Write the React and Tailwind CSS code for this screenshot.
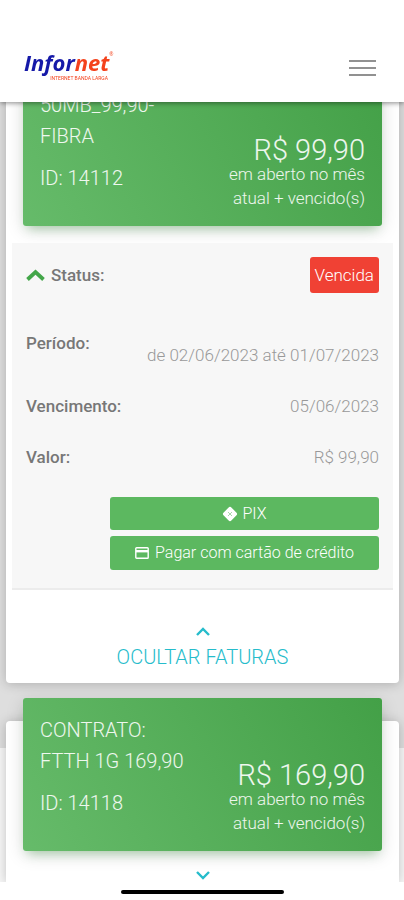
import React from 'react';

const contracts = [
    { id: '14112', lines: ['50MB_99,90-', 'FIBRA'], amount: 'R$ 99,90' },
    { id: '14118', lines: ['CONTRATO:', 'FTTH 1G 169,90'], amount: 'R$ 169,90' },
];

const Logo = () => (
    <a href="#" className="flex w-22 flex-col" aria-label="Infornet">
        <span className="flex items-start font-['Open_Sans',sans-serif] text-[22px] leading-7 font-bold italic text-[#1519a8]">
            Infor<span className="text-[#f4421c]">net</span>
            <span className="pt-1 text-[5px] leading-none font-normal not-italic text-[#f4421c]">®</span>
        </span>
        <span className="pr-1 text-right text-[5px] leading-none whitespace-nowrap text-[#f4421c]">
            INTERNET BANDA LARGA
        </span>
    </a>
);

const Header = () => (
    <header className="fixed inset-x-0 top-0 z-10 flex h-[102px] items-start justify-between bg-white pt-12 pr-7 pl-6 shadow-[0_1px_5px_rgba(0,0,0,0.45)]">
        <Logo />
        <button type="button" aria-label="Menu" className="mt-3 flex flex-col gap-[5px]">
            <span className="h-0.5 w-[27px] bg-[#919191]" />
            <span className="h-0.5 w-[27px] bg-[#919191]" />
            <span className="h-0.5 w-[27px] bg-[#919191]" />
        </button>
    </header>
);

const ContractHeader = ({ contract }) => (
    <div className="-mt-[23px] ml-[17px] mr-[17px] flex h-[153px] justify-between rounded-[3px] bg-linear-60 from-[#66bb6a] to-[#43a047] px-[17px] pt-[17px] font-light text-white/90 shadow-[0_4px_18px_rgba(0,0,0,0.14),0_7px_10px_-5px_rgba(76,175,80,0.4)]">
        <div className="text-xl leading-[31px] whitespace-nowrap">
            <h2>
                {contract.lines.map((line) => (
                    <span key={line} className="block">{line}</span>
                ))}
            </h2>
            <p className="mt-[11px]">ID: {contract.id}</p>
        </div>
        <div className="flex flex-col justify-end pb-4 text-right text-[17px] leading-6 whitespace-nowrap">
            <p className="text-[29px] leading-6">{contract.amount}</p>
            <p>em aberto no mês</p>
            <p>atual + vencido(s)</p>
        </div>
    </div>
);

const ContractCard = ({ contract, className, children }) => (
    <article className={`mr-[5px] ml-1.5 bg-white shadow-[0_1px_12px_rgba(0,0,0,0.22)] ${className}`}>
        <ContractHeader contract={contract} />
        {children}
    </article>
);

const Chevron = ({ down }) => (
    <svg viewBox="0 0 20 20" className="size-5" fill="none" stroke="currentColor" strokeWidth="2.4" aria-hidden="true">
        <path d={down ? 'M4 7l6 6 6-6' : 'M4 13l6-6 6 6'} />
    </svg>
);

const PixIcon = () => (
    <svg viewBox="0 0 16 16" className="size-4" aria-hidden="true">
        <path d="M6.4 1.7a2.2 2.2 0 0 1 3.2 0l4.7 4.7a2.2 2.2 0 0 1 0 3.2l-4.7 4.7a2.2 2.2 0 0 1-3.2 0L1.7 9.6a2.2 2.2 0 0 1 0-3.2z" fill="#fff" />
        <path d="M6 6l4 4M6 10l4-4" fill="none" stroke="#9ed3a0" strokeWidth="0.9" />
    </svg>
);

const CardIcon = () => (
    <svg viewBox="0 0 14 12" className="h-3 w-3.5" fill="none" aria-hidden="true">
        <rect x="0.8" y="0.8" width="12.4" height="10.4" rx="0.8" stroke="#fff" strokeWidth="1.4" />
        <path d="M1 4.2h12" stroke="#fff" strokeWidth="2.4" />
    </svg>
);

const Invoice = () => (
    <section className="mx-1.5 mt-[17px] border-b-2 border-[#ececec] bg-[#f7f7f7] px-3.5 pt-3.5 pb-[18px] text-[17px] leading-6 font-light text-[#999]">
        <div className="flex items-center justify-between">
            <button type="button" className="flex items-center gap-1.5 font-medium text-[#777]">
                <svg viewBox="0 0 19 13" className="h-[13px] w-[19px]" fill="none" aria-hidden="true">
                    <path d="M1.5 10.5 9.5 3l8 7.5" stroke="#43a649" strokeWidth="3.8" />
                </svg>
                Status:
            </button>
            <span className="rounded-[3px] bg-[#f04134] px-[5px] py-1.5 text-white">Vencida</span>
        </div>
        <dl>
            <div className="mt-[38px] flex justify-between">
                <dt className="font-medium text-[#777]">Período:</dt>
                <dd className="pt-3">de 02/06/2023 até 01/07/2023</dd>
            </div>
            <div className="mt-[27px] flex justify-between">
                <dt className="font-medium text-[#777]">Vencimento:</dt>
                <dd>05/06/2023</dd>
            </div>
            <div className="mt-[27px] flex justify-between">
                <dt className="font-medium text-[#777]">Valor:</dt>
                <dd>R$ 99,90</dd>
            </div>
        </dl>
        <div className="mt-7 ml-[84px] flex flex-col gap-1.5 text-base text-white">
            <button type="button" className="flex h-[33px] items-center justify-center gap-1 rounded-[3px] bg-[#5cb860]">
                <PixIcon />
                PIX
            </button>
            <button type="button" className="flex h-[34px] items-center justify-center gap-1.5 rounded-[3px] bg-[#5cb860]">
                <CardIcon />
                Pagar com cartão de crédito
            </button>
        </div>
    </section>
);

export default function App() {
    return (
        <div className="min-h-screen bg-white font-['Roboto',sans-serif]">
            <Header />
            <main className="flex flex-col gap-[38px] overflow-hidden bg-[linear-gradient(#dedede_748px,#f7f7f7_748px)] pt-24">
                <ContractCard contract={contracts[0]} className="rounded-b-[4px]">
                    <Invoice />
                    <button type="button" className="flex w-full flex-col items-center pt-8 pb-2.5 text-xl leading-[31px] font-light text-[#26bccb]">
                        <Chevron />
                        OCULTAR FATURAS
                    </button>
                </ContractCard>
                <ContractCard contract={contracts[1]} className="rounded-t-[4px]">
                    <button type="button" aria-label="Mostrar faturas" className="flex h-[31px] w-full items-start justify-center pt-3.5 text-[#26bccb]">
                        <Chevron down />
                    </button>
                </ContractCard>
            </main>
            <footer className="flex justify-center bg-white pt-2 pb-1.5">
                <span className="h-1 w-[163px] rounded-full bg-black" />
            </footer>
        </div>
    );
}
